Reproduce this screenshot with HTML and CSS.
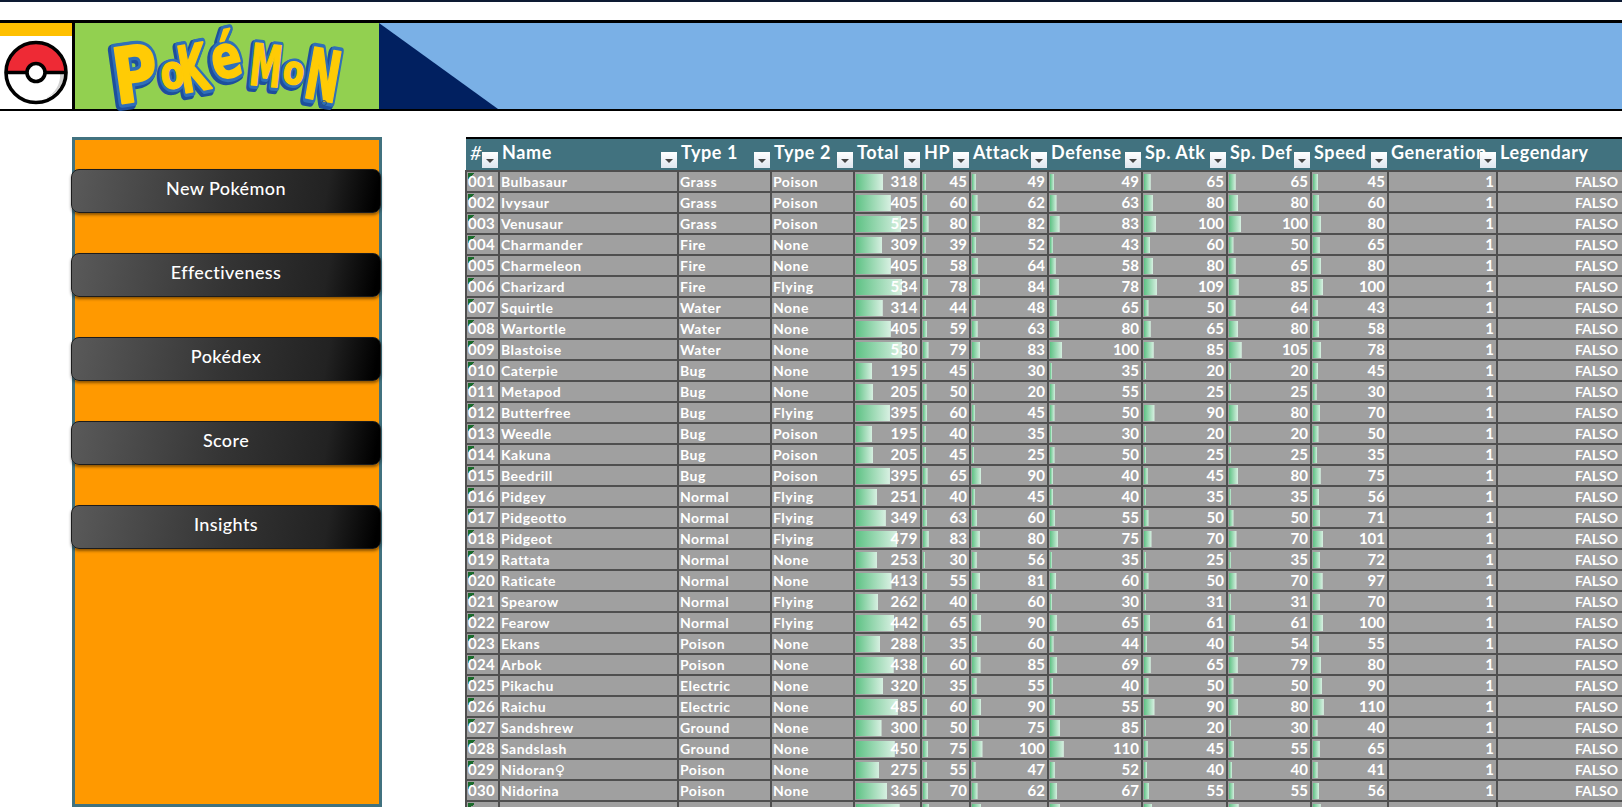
FILE: index.html
```html
<!DOCTYPE html>
<html lang="en">
<head>
  <meta charset="UTF-8">
  <meta name="viewport" content="width=device-width, initial-scale=1.0">
  <title>Pokémon</title>
  <link rel="stylesheet" href="styles.css">
</head>
<body>
  <div class="topline"></div>

  <header class="banner">
    <div class="ball-box">
      <div class="strip"></div>
      <svg class="ball" width="72" height="72" viewBox="0 0 72 72">
        <path d="M6 36.5a30 30 0 0 1 60 0z" fill="#ee2a35"/>
        <path d="M6 36.5a30 30 0 0 0 60 0z" fill="#fff"/>
        <path d="M60 38a25 25 0 0 1-14 24a30 30 0 0 0 19-25z" fill="#d2d2d2"/>
        <circle cx="36" cy="36.5" r="30" fill="none" stroke="#000" stroke-width="3.6"/>
        <path d="M6 36.5h60" stroke="#000" stroke-width="3.6"/>
        <circle cx="36" cy="36.5" r="9" fill="#fff" stroke="#000" stroke-width="3.6"/>
      </svg>
    </div>
    <div class="logo-box">
      <svg class="logo" width="240" height="86" viewBox="0 0 240 86">
        <defs>
          <g id="letters">
            <text transform="translate(31 78) rotate(-8) scale(1 1.24)" font-size="62">P</text>
            <text transform="translate(66 65) rotate(-6) scale(.76 1)" font-size="46">o</text>
            <text transform="translate(89 68) rotate(-10) scale(.7 1.2)" font-size="54">K</text>
            <text transform="translate(122 54) rotate(-12) scale(.86 1.15)" font-size="52">é</text>
            <text transform="translate(156 63) rotate(6) scale(.62 1.1)" font-size="52">M</text>
            <text transform="translate(184 61) rotate(8) scale(.74 .95)" font-size="42">o</text>
            <text transform="translate(211 77) rotate(10) scale(.76 1.3)" font-size="54">N</text>
          </g>
        </defs>
        <use href="#letters" class="logo-back" x="-2" y="2"/>
        <use href="#letters" class="logo-mid"/>
        <use href="#letters" class="logo-front"/>
        <circle cx="216" cy="80" r="2.4" fill="none" stroke="#23507e" stroke-width="1"/>
      </svg>
    </div>
    <div class="sky"><div class="corner"></div></div>
  </header>

  <main class="content">
    <nav class="sidebar">
      <a class="btn" href="javascript:;">New Pokémon</a>
      <a class="btn" href="javascript:;">Effectiveness</a>
      <a class="btn" href="javascript:;">Pokédex</a>
      <a class="btn" href="javascript:;">Score</a>
      <a class="btn" href="javascript:;">Insights</a>
    </nav>

    <table class="sheet">
      <colgroup>
        <col class="c-id"><col class="c-name"><col class="c-type1"><col class="c-type2">
        <col class="c-total"><col class="c-hp"><col class="c-atk"><col class="c-def">
        <col class="c-spatk"><col class="c-spdef"><col class="c-speed"><col class="c-gen"><col class="c-leg">
      </colgroup>
      <thead>
        <tr>
          <th class="hash">#<i class="filter"></i></th>
          <th>Name<i class="filter"></i></th>
          <th>Type 1<i class="filter"></i></th>
          <th>Type 2<i class="filter"></i></th>
          <th>Total<i class="filter"></i></th>
          <th>HP<i class="filter"></i></th>
          <th>Attack<i class="filter"></i></th>
          <th>Defense<i class="filter"></i></th>
          <th>Sp. Atk<i class="filter"></i></th>
          <th>Sp. Def<i class="filter"></i></th>
          <th>Speed<i class="filter"></i></th>
          <th>Generation<i class="filter"></i></th>
          <th>Legendary</th>
        </tr>
      </thead>
      <tbody id="rows"></tbody>
    </table>
  </main>

  <script src="script.js"></script>
</body>
</html>
```

FILE: styles.css
```css
html,
body {
  overflow: hidden;
}

body {
  margin: 0;
  height: 807px;
  background: #fff;
  font-family: Lato, "DejaVu Sans", sans-serif;
}

.topline {
  height: 2px;
  margin-bottom: 18px;
  background: #0d1a33;
}

/* banner */
.banner {
  display: flex;
  height: 86px;
  border-top: 3px solid #000;
  border-bottom: 2px solid #000;
}

.ball-box {
  width: 72px;
  border-right: 3px solid #000;
  background: #fff;
}

.strip {
  height: 13px;
  background: #ffc000;
}

.ball {
  display: block;
}

.logo-box {
  width: 304px;
  background: #92d050;
}

.logo {
  display: block;
  margin-left: 33px;
  overflow: visible;
}

.logo text {
  font-family: "DejaVu Sans", sans-serif;
  font-weight: 700;
  text-anchor: middle;
  stroke-linejoin: round;
}

.logo-back {
  fill: #1d4f9c;
  stroke: #1d4f9c;
  stroke-width: 9px;
}

.logo-mid {
  fill: #2f6fb8;
  stroke: #2f6fb8;
  stroke-width: 7px;
}

.logo-front {
  fill: #ffcb05;
  stroke: #ffcb05;
  stroke-width: 1.5px;
}

.sky {
  flex: 1;
  background: #7ab0e6;
}

.corner {
  width: 119px;
  height: 100%;
  background: #012060;
  clip-path: polygon(0 0, 100% 100%, 0 100%);
}

/* sidebar and table */
.content {
  display: flex;
  align-items: flex-start;
  margin-top: 26px;
  padding-left: 72px;
}

.sidebar {
  display: flex;
  flex-direction: column;
  flex: none;
  gap: 40px;
  box-sizing: border-box;
  width: 310px;
  height: 670px;
  padding-top: 29px;
  border: 3px solid #41727f;
  background: #ff9900;
}

.btn {
  display: block;
  height: 44px;
  margin: 0 -2px 0 -4px;
  box-sizing: border-box;
  border: 1px solid #1c1c1c;
  border-radius: 8px;
  background: linear-gradient(100deg, #5a5a5a 0%, #343434 50%, #222 82%, #000 98%);
  box-shadow: 0 2px 3px rgba(0, 0, 0, .45);
  color: #fff;
  font-size: 18px;
  font-weight: 500;
  letter-spacing: .4px;
  line-height: 36px;
  text-align: center;
  text-decoration: none;
}

.sheet {
  flex: none;
  width: 1161px;
  margin-left: 83px;
  border-collapse: collapse;
  table-layout: fixed;
  color: #fff;
}

.c-id { width: 33px; }
.c-name { width: 179px; }
.c-type1 { width: 93px; }
.c-type2 { width: 83px; }
.c-total { width: 67px; }
.c-hp { width: 49px; }
.c-atk { width: 78px; }
.c-def { width: 94px; }
.c-spatk { width: 85px; }
.c-spdef { width: 84px; }
.c-speed { width: 77px; }
.c-gen { width: 109px; }
.c-leg { width: 130px; }

.sheet th {
  position: relative;
  height: 33px;
  padding: 0 0 5px 3px;
  box-sizing: border-box;
  overflow: hidden;
  background: #41727f;
  border-top: 2px solid #000;
  font-size: 18px;
  font-weight: 700;
  letter-spacing: .6px;
  text-align: left;
  white-space: nowrap;
}

.sheet th.hash {
  padding-left: 4px;
  font-size: 20px;
  font-style: italic;
  font-weight: 400;
}

.filter {
  position: absolute;
  right: 1px;
  bottom: 2px;
  width: 16px;
  height: 16px;
  background: linear-gradient(#fff, #dfe6ef);
}

.filter::after {
  content: "";
  position: absolute;
  left: 4px;
  top: 7px;
  border: 4px solid transparent;
  border-top: 4px solid #444;
  border-bottom: 0;
}

.sheet td {
  height: 21px;
  padding: 0 2px 0 1px;
  box-sizing: border-box;
  overflow: hidden;
  border: 2px solid #4f4f4f;
  background-color: #a0a0a0;
  font-size: 14px;
  font-weight: 700;
  letter-spacing: .5px;
  line-height: 17px;
  white-space: nowrap;
}

.sheet td.id {
  background-image: linear-gradient(135deg, #1b6a2b 50%, transparent 50%);
  background-repeat: no-repeat;
  background-position: 1px 1px;
  background-size: 7px 7px;
  font-size: 15px;
  letter-spacing: .3px;
}

.sheet td.num {
  text-align: right;
  letter-spacing: 0;
  font-size: 15px;
}

/* data bar, --bar comes from the value */
.sheet td.bar {
  background-image: linear-gradient(90deg, #5fc285, #d8f0e2);
  background-repeat: no-repeat;
  background-position: 1px center;
  background-size: var(--bar) 16px;
}

.sheet td.total {
  letter-spacing: .5px;
}

.sheet td.legend {
  padding-right: 8px;
  text-align: right;
  letter-spacing: 0;
}
```

FILE: script.js
```js
var data = [
  ['001','Bulbasaur','Grass','Poison',318,45,49,49,65,65,45],
  ['002','Ivysaur','Grass','Poison',405,60,62,63,80,80,60],
  ['003','Venusaur','Grass','Poison',525,80,82,83,100,100,80],
  ['004','Charmander','Fire','None',309,39,52,43,60,50,65],
  ['005','Charmeleon','Fire','None',405,58,64,58,80,65,80],
  ['006','Charizard','Fire','Flying',534,78,84,78,109,85,100],
  ['007','Squirtle','Water','None',314,44,48,65,50,64,43],
  ['008','Wartortle','Water','None',405,59,63,80,65,80,58],
  ['009','Blastoise','Water','None',530,79,83,100,85,105,78],
  ['010','Caterpie','Bug','None',195,45,30,35,20,20,45],
  ['011','Metapod','Bug','None',205,50,20,55,25,25,30],
  ['012','Butterfree','Bug','Flying',395,60,45,50,90,80,70],
  ['013','Weedle','Bug','Poison',195,40,35,30,20,20,50],
  ['014','Kakuna','Bug','Poison',205,45,25,50,25,25,35],
  ['015','Beedrill','Bug','Poison',395,65,90,40,45,80,75],
  ['016','Pidgey','Normal','Flying',251,40,45,40,35,35,56],
  ['017','Pidgeotto','Normal','Flying',349,63,60,55,50,50,71],
  ['018','Pidgeot','Normal','Flying',479,83,80,75,70,70,101],
  ['019','Rattata','Normal','None',253,30,56,35,25,35,72],
  ['020','Raticate','Normal','None',413,55,81,60,50,70,97],
  ['021','Spearow','Normal','Flying',262,40,60,30,31,31,70],
  ['022','Fearow','Normal','Flying',442,65,90,65,61,61,100],
  ['023','Ekans','Poison','None',288,35,60,44,40,54,55],
  ['024','Arbok','Poison','None',438,60,85,69,65,79,80],
  ['025','Pikachu','Electric','None',320,35,55,40,50,50,90],
  ['026','Raichu','Electric','None',485,60,90,55,90,80,110],
  ['027','Sandshrew','Ground','None',300,50,75,85,20,30,40],
  ['028','Sandslash','Ground','None',450,75,100,110,45,55,65],
  ['029','Nidoran♀','Poison','None',275,55,47,52,40,40,41],
  ['030','Nidorina','Poison','None',365,70,62,67,55,55,56],
  ['031','','','',505,90,92,87,75,85,76]
]

// slope and offset of the data bar in each number column
var scale = [
  [.0885,-1],[.07,0],[.13,-2.5],[.155,-3.2],[.15,-3],[.15,-3],[.09,1]
]

var rows = document.querySelector('#rows')

data.forEach(function(row,r){
  // the last row is cut by the window, only its bars show
  var cut = r === data.length-1
  var tr = document.createElement('tr')
  row.forEach(function(value,i){
    var td = document.createElement('td')
    if(!cut){ td.textContent = value }
    if(i === 0){ td.className = 'id' }
    if(i > 3){
      td.className = i === 4 ? 'num bar total' : 'num bar'
      var s = scale[i-4]
      td.style.setProperty('--bar', Math.max(2, value*s[0]+s[1]) + 'px')
    }
    tr.appendChild(td)
  })
  var gen = document.createElement('td')
  gen.className = 'num'
  if(!cut){ gen.textContent = '1' }
  tr.appendChild(gen)
  var legend = document.createElement('td')
  legend.className = 'legend'
  if(!cut){ legend.textContent = 'FALSO' }
  tr.appendChild(legend)
  rows.appendChild(tr)
})
```
